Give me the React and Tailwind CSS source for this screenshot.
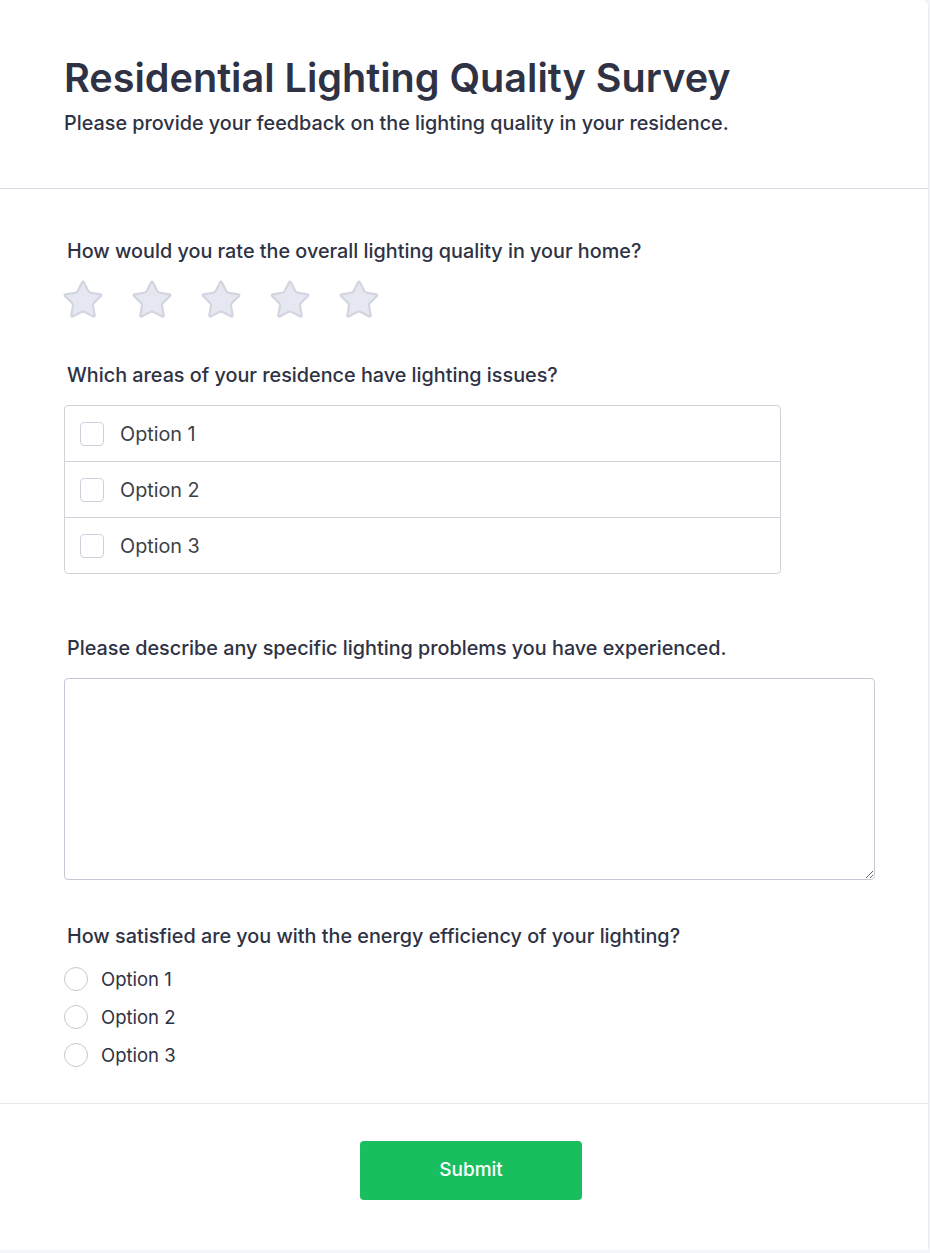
import { Star } from "lucide-react";

const options = ["Option 1", "Option 2", "Option 3"];

function Label({ children, className = "" }) {
  return (
    <p className={`pl-[3px] text-[19.8px] font-medium leading-[28px] text-[#2e3244] ${className}`}>
      {children}
    </p>
  );
}

export default function App() {
  return (
    <div className="min-h-[1253px] bg-[#f4f5fb] font-['Inter',sans-serif]">
      <div className="w-[929px] rounded-tr-md border-r border-[#ececf4] bg-white pb-[50px]">
        <header className="border-b border-[#dcdce8] px-16 pb-[51px] pt-[54px]">
          <h1 className="text-[39.6px] font-semibold leading-[48px] text-[#2e3244]">
            Residential Lighting Quality Survey
          </h1>
          <p className="mt-[7px] text-[19.8px] font-medium leading-[28px] text-[#2e3244]">
            Please provide your feedback on the lighting quality in your residence.
          </p>
        </header>

        <main className="border-b border-[#e6e6ee] px-16 pb-[29px] pt-[48px]">
          <Label>How would you rate the overall lighting quality in your home?</Label>
          <div className="-ml-[3px] mt-[13px] flex gap-[25px]">
            {[0, 1, 2, 3, 4].map((i) => (
              <Star key={i} size={44} strokeWidth={1.2} fill="#e6e8f1" color="#d3d6e1" />
            ))}
          </div>

          <Label className="mt-[39px]">Which areas of your residence have lighting issues?</Label>
          <div className="mt-4 w-[717px] overflow-hidden rounded-[4px] border border-[#d0d2da]">
            {options.map((opt, i) => (
              <label
                key={opt}
                className={`flex items-center gap-4 px-[15px] ${i > 0 ? "h-[56px] border-t border-[#d0d2da]" : "h-[55px]"}`}
              >
                <span className="h-6 w-6 rounded-[4px] border border-[#ccd0da] bg-white" />
                <span className="text-[19.8px] leading-[28px] text-[#3d3f48]">{opt}</span>
              </label>
            ))}
          </div>

          <Label className="mt-[60px]">Please describe any specific lighting problems you have experienced.</Label>
          <textarea className="mt-4 block h-[202px] w-[811px] rounded-[4px] border border-[#c6c8d6] bg-white p-3 text-[18px] outline-none" />

          <Label className="mt-[42px]">How satisfied are you with the energy efficiency of your lighting?</Label>
          <div className="mt-[10px]">
            {options.map((opt) => (
              <label key={opt} className="flex h-[38px] items-center gap-[13px]">
                <span className="h-6 w-6 rounded-full border border-[#c6c9d3] bg-white" />
                <span className="text-[18.5px] leading-[28px] text-[#2e3244]">{opt}</span>
              </label>
            ))}
          </div>
        </main>

        <footer className="flex justify-center pl-[14px] pt-[37px]">
          <button className="h-[59px] w-[222px] rounded-[4px] bg-[#19be5f] text-[19px] font-medium text-white">
            Submit
          </button>
        </footer>
      </div>
    </div>
  );
}
